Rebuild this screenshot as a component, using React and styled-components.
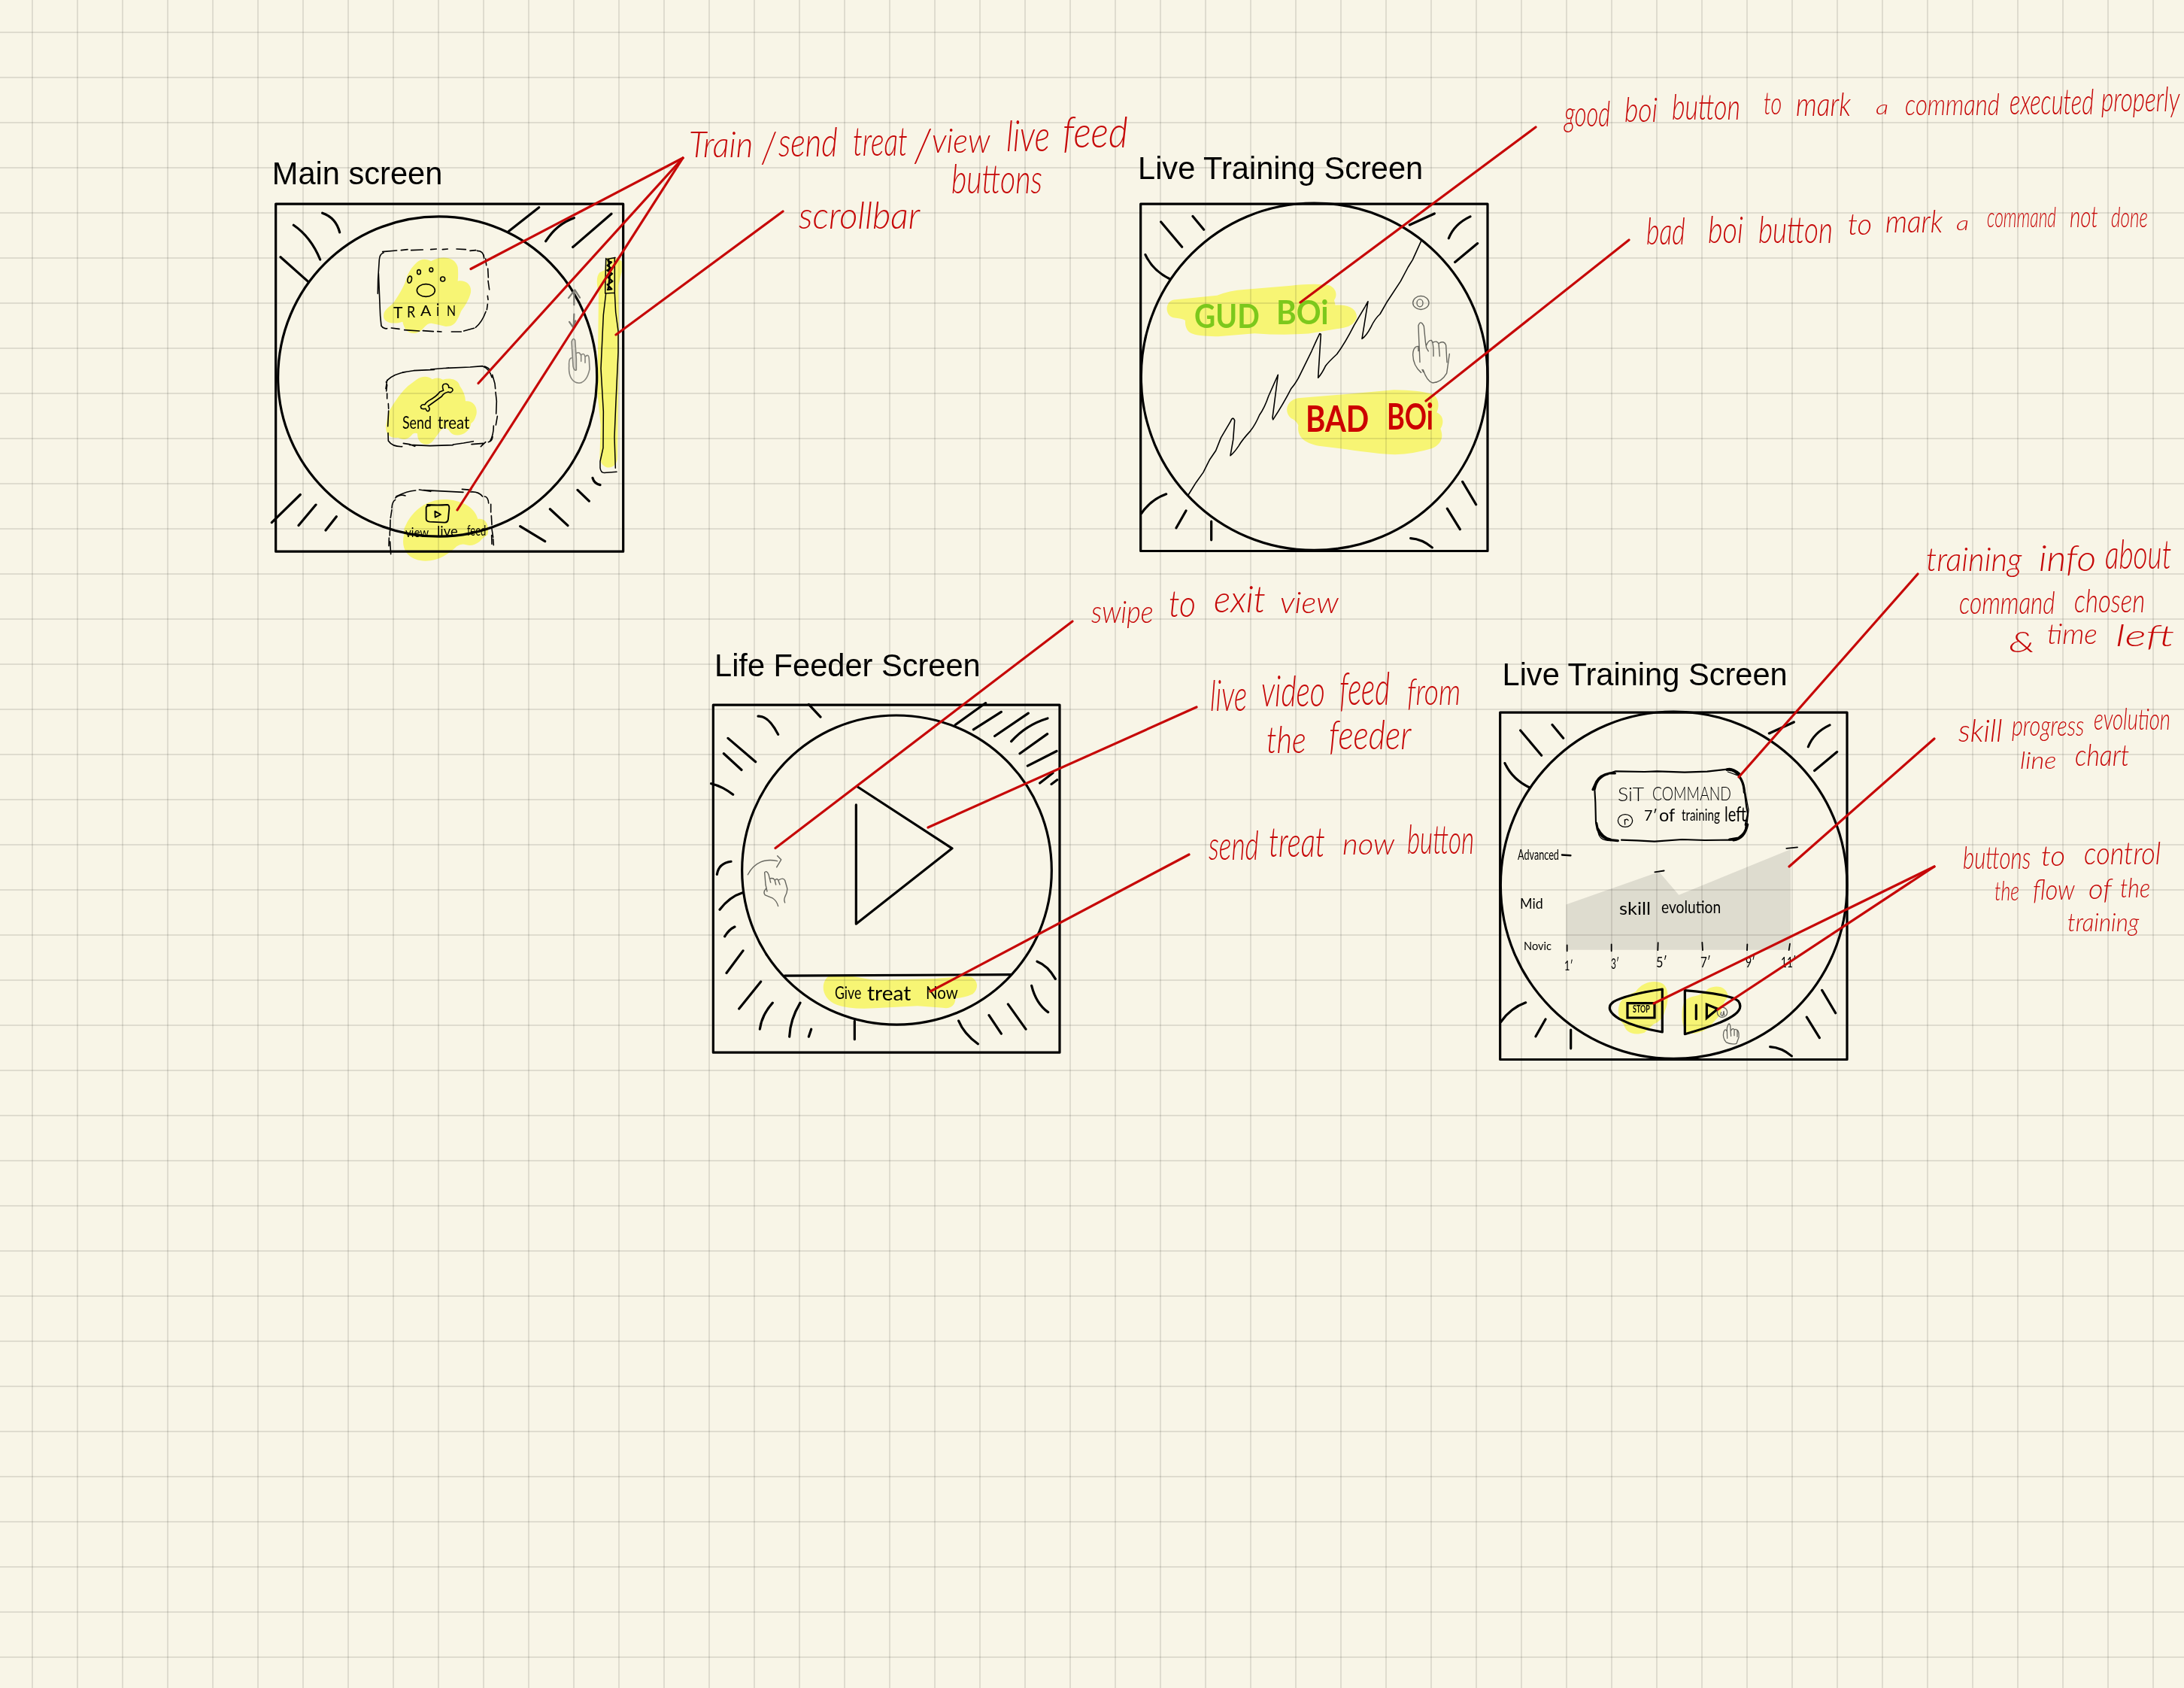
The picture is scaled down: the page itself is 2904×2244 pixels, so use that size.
import React, { useLayoutEffect, useRef, useState } from 'react';
import styled, { createGlobalStyle } from 'styled-components';

const INK = '#000000';
const RED = '#c60808';
const GREEN = '#7cc81c';

const Global = createGlobalStyle`
  html, body { margin: 0; padding: 0; background: #f8f5e7; }
`;

const Paper = styled.main`
  position: relative;
  width: 2904px;
  height: 2244px;
  overflow: hidden;
  background-color: #f8f5e7;
  background-image:
    linear-gradient(to right, rgba(0, 0, 0, 0.1) 2px, transparent 2px),
    linear-gradient(to bottom, rgba(0, 0, 0, 0.1) 2px, transparent 2px);
  background-size: 60px 60px;
  background-position: 42px 42px;
`;

/* A drawing pinned on the paper */
const Sketch = styled.svg`
  position: absolute;
  left: ${(p) => p.$x}px;
  top: ${(p) => p.$y}px;
  width: ${(p) => p.$w}px;
  height: ${(p) => p.$h}px;
  overflow: visible;
  fill: none;
  stroke: ${INK};
  stroke-width: 3.2px;
  stroke-linecap: round;
  stroke-linejoin: round;

  * { vector-effect: non-scaling-stroke; }
`;

const MarkerLayer = styled(Sketch)`
  mix-blend-mode: multiply;
  fill: #feff80;
  stroke: none;
`;

const Fine = styled.g`
  stroke-width: ${(p) => p.$width || 1.6}px;
`;

const Pencil = styled.g`
  stroke: ${(p) => p.$tone || '#66665f'};
  stroke-width: ${(p) => p.$width || 1.4}px;
`;

const Leaders = styled(Sketch)`
  stroke: ${RED};
  stroke-width: 3.2px;
`;

const Title = styled.h2`
  position: absolute;
  left: ${(p) => p.$x}px;
  top: ${(p) => p.$y}px;
  margin: 0;
  font: 400 41.6px/48px 'Liberation Sans', Arial, sans-serif;
  color: ${INK};
  white-space: nowrap;
`;

const Note = styled.p`
  margin: 0;
  color: ${(p) => p.$color || INK};
  font-family: Lato, 'Open Sans', sans-serif;
  font-style: ${(p) => (p.$upright ? 'normal' : 'italic')};
  font-weight: ${(p) => p.$weight || 400};
`;

const Ink = styled.span`
  position: absolute;
  left: ${(p) => p.$x}px;
  top: ${(p) => p.$y - p.$size * 0.887}px;
  font-size: ${(p) => p.$size}px;
  line-height: 1;
  white-space: nowrap;
  transform-origin: 0 88.7%;
`;

function Word({ text, x, to, y, rise }) {
  const ref = useRef(null);
  const [scale, setScale] = useState(1);
  useLayoutEffect(() => {
    setScale((to - x) / ref.current.offsetWidth);
  }, [x, to]);
  return (
    <Ink ref={ref} $x={x} $y={y} $size={rise / 0.76} style={{ transform: `scaleX(${scale})` }}>
      {text}
    </Ink>
  );
}

function Handwriting({ words, ...style }) {
  return (
    <Note {...style}>
      {words.map(([text, x, to, y, rise]) => (
        <React.Fragment key={`${text}${x}`}>
          <Word text={text} x={x} to={to} y={y} rise={rise} />{' '}
        </React.Fragment>
      ))}
    </Note>
  );
}

/* word, left, right, baseline, height above the baseline */
const annotations = [
  [
    ['Train', 916, 1001, 209, 36], ['/', 1013, 1031, 216, 44], ['send', 1035, 1114, 209, 40],
    ['treat', 1134, 1207, 208, 40], ['/', 1216, 1237, 216, 46], ['view', 1239, 1317, 204, 34],
    ['live', 1338, 1396, 201, 44], ['feed', 1413, 1500, 196, 44], ['buttons', 1265, 1386, 258, 40],
  ],
  [['scrollbar', 1062, 1223, 304, 38]],
  [
    ['good', 2080, 2141, 168, 36], ['boi', 2160, 2204, 163, 35], ['button', 2223, 2314, 159, 36],
    ['to', 2345, 2369, 153, 31], ['mark', 2388, 2461, 155, 33], ['a', 2494, 2511, 152, 20],
    ['command', 2533, 2659, 153, 30], ['executed', 2672, 2784, 152, 36], ['properly', 2794, 2898, 149, 34],
  ],
  [
    ['bad', 2189, 2241, 325, 38], ['boi', 2271, 2318, 323, 38], ['button', 2338, 2437, 323, 38],
    ['to', 2457, 2489, 312, 30], ['mark', 2507, 2583, 309, 32], ['a', 2601, 2618, 306, 20],
    ['command', 2642, 2734, 303, 28], ['not', 2752, 2790, 302, 30], ['done', 2807, 2856, 302, 29],
  ],
  [
    ['swipe', 1451, 1534, 828, 32], ['to', 1554, 1590, 820, 38], ['exit', 1614, 1683, 814, 38],
    ['view', 1702, 1780, 815, 30],
  ],
  [
    ['live', 1609, 1658, 945, 43], ['video', 1677, 1762, 939, 43], ['feed', 1781, 1848, 938, 46],
    ['from', 1871, 1942, 937, 38], ['the', 1684, 1737, 1001, 37], ['feeder', 1767, 1876, 997, 40],
  ],
  [
    ['send', 1607, 1674, 1144, 40], ['treat', 1687, 1762, 1139, 42], ['now', 1785, 1854, 1136, 30],
    ['button', 1871, 1960, 1136, 40],
  ],
  [
    ['training', 2561, 2688, 760, 33], ['info', 2711, 2787, 759, 36], ['about', 2799, 2887, 757, 40],
    ['command', 2605, 2733, 816, 32], ['chosen', 2758, 2852, 815, 33], ['&', 2671, 2706, 868, 28],
    ['time', 2722, 2789, 857, 28], ['left', 2813, 2892, 859, 30],
  ],
  [
    ['skill', 2604, 2663, 986, 32], ['progress', 2675, 2771, 979, 28], ['evolution', 2784, 2886, 970, 30],
    ['line', 2686, 2734, 1023, 24], ['chart', 2759, 2831, 1018, 30],
  ],
  [
    ['buttons', 2610, 2700, 1155, 32], ['to', 2714, 2746, 1151, 29], ['control', 2771, 2873, 1149, 32],
    ['the', 2652, 2685, 1198, 27], ['flow', 2703, 2759, 1197, 28], ['of', 2777, 2808, 1196, 28],
    ['the', 2819, 2859, 1194, 27], ['training', 2749, 2844, 1239, 25],
  ],
];

const mainWords = [
  ['Send', 535, 574, 571, 17], ['treat', 582, 624, 571, 18],
  ['view', 539, 570, 714, 13], ['live', 581, 609, 713, 14], ['feed', 621, 646, 713, 15],
];
const trainLetters = [
  ['T', 523, 535, 423, 16], ['R', 541, 552, 422, 16], ['A', 559, 573, 421, 15],
  ['i', 580, 584, 421, 17], ['N', 594, 606, 421, 15],
];
const feederWords = [['Give', 1110, 1145, 1329, 18], ['treat', 1153, 1211, 1331, 21], ['Now', 1231, 1274, 1329, 17]];

const statsWords = [
  ['7′', 2186, 2204, 1092, 15], ['of', 2206, 2227, 1093, 17], ['training', 2236, 2287, 1091, 16],
  ['left', 2293, 2322, 1092, 20], ['skill', 2153, 2195, 1217, 17], ['evolution', 2209, 2288, 1215, 17],
  ['Advanced', 2018, 2073, 1143, 14], ['Mid', 2021, 2052, 1208, 14], ['Novic', 2026, 2063, 1263, 12],
  ['1′', 2080, 2092, 1290, 13], ['3′', 2142, 2153, 1288, 14], ['5′', 2202, 2217, 1286, 14],
  ['7′', 2261, 2275, 1286, 14], ['9′', 2321, 2334, 1286, 14], ['11′', 2368, 2388, 1286, 14],
];
const commandWords = [['SiT', 2151, 2186, 1065, 19], ['COMMAND', 2197, 2302, 1064, 19]];

const leaders = [
  [908, 210, 626, 357.5], [908, 210, 636, 509.5], [908, 210, 608, 678], [1041, 281, 819, 445],
  [2042, 169, 1729, 402], [2166, 319, 1896, 533], [1426, 826, 1031, 1127.5], [1591, 940, 1234, 1100],
  [1581, 1136, 1237, 1318], [2550, 763, 2312, 1033], [2572, 982, 2379, 1152],
  [2572, 1152, 2199, 1334], [2572, 1152, 2284, 1342],
];

const square = { $w: 520, $h: 560, viewBox: '0 0 1560 1568', preserveAspectRatio: 'none' };

function MainScreen() {
  return (
    <section>
      <MarkerLayer $x={490} $y={320} $w={180} $h={430} viewBox="0 0 540 1290">
        <path d="M193 86C210 70 235 72 249 82C290 57 345 63 356 105Q359 130 356 161C390 155 417 180 406 214Q397 245 370 280C353 320 346 343 308 342Q280 334 250 329C224 330 219 361 190 368C160 373 143 357 136 323C106 333 70 331 61 308C56 280 75 271 98 250Q145 183 155 139Q169 107 193 86Z" />
        <path d="M190 555C215 537 240 540 254 553Q275 542 297 554C324 546 357 552 364 579Q386 609 387 640C415 636 437 660 430 694Q421 724 409 728C405 772 345 790 325 762Q308 735 288 757Q270 782 258 797C240 824 194 816 195 769Q180 762 168 780C150 798 132 792 117 785C85 790 66 770 70 735L79 685Q121 612 157 580Z" />
        <path d="M150 1132C177 1075 233 1033 300 1032C371 1032 425 1064 436 1110C467 1105 484 1135 475 1172Q455 1184 443 1200Q415 1221 390 1213Q370 1206 352 1219C320 1250 279 1278 226 1277C160 1275 126 1232 142 1170Q138 1150 150 1132Z" />
      </MarkerLayer>
      <MarkerLayer $x={340} $y={190} {...square}>
        <path d="M1372 482L1391 474L1400 428L1436 427L1460 440V480L1447 530L1449 700L1443 1170C1443 1215 1386 1225 1372 1175L1376 1050L1363 930L1368 560Q1353 500 1372 482Z" />
      </MarkerLayer>
      <Title $x={361.8} $y={207}>Main screen</Title>
      <Sketch $x={340} $y={190} {...square}>
        <rect x="80" y="227" width="1386" height="1294" />
        <path d="M731 274C1080 274 1361 540 1361 870C1361 1200 1080 1465 731 1465C375 1465 89 1200 89 873C89 540 375 274 731 274Z" />
        <path d="M266 261Q320 278 335 333M151 306Q220 350 257 434M99 425L210 517M1010 328L1130 240M1157 366Q1200 302 1270 279M1265 388L1419 264M64 1413L178 1309M171 1424L240 1347M279 1442L322 1391M1344 1247Q1350 1268 1374 1273M1284 1292L1330 1333M1174 1363L1245 1424M1055 1427L1154 1483" />
        <Fine $width={1.5}>
          <path d="M1398 433L1434 427M1397 430L1394 560L1432 558L1432 427M1397 560L1387 640L1377 840L1387 1000L1386 1135L1374 1185V1210Q1377 1228 1390 1228L1440 1224M1432 558L1436 630L1446 700V780L1437 960L1431 1095L1435 1210" />
          <path strokeWidth="2.4" d="M1405 438L1419 444L1403 456L1420 468L1402 474L1422 487L1405 500L1423 515L1403 527L1420 544L1404 546M1408 436L1412 500L1406 545" />
        </Fine>
        <Pencil $tone="#7d7c74" $width={2.2}>
          <path d="M1248 577L1273 547L1293 576M1270 550V603M1270 637L1268 685M1251 666L1266 686L1276 662" />
        </Pencil>
        <Pencil $tone="#85847c" $width={1.6}>
          <path fill="#d8d5ca" d="M1266 831L1260 740Q1266 722 1274 735L1279 804V845Q1270 850 1266 831Z" />
          <path d="M1279 783Q1292 775 1298 792V813M1298 790Q1310 778 1314 797V818M1314 796Q1329 782 1330 805L1332 842C1325 874 1310 892 1290 894C1262 893 1247 867 1250 830Q1248 802 1260 800" />
        </Pencil>
      </Sketch>
      <Sketch $x={490} $y={320} $w={180} $h={430} viewBox="0 0 540 1290">
        <Fine>
          <path d="M60 48Q45 53 43 75L38 153L37 211M43 75L38 153M40 130L47 300L51 340M56 44L113 39M130 38L156 35M170 38L217 36M248 35L271 33M295 35L316 33M351 33L388 35M405 40L428 38M433 40Q460 40 461 70M467 72L470 98M476 111L478 147M477 160L482 195M475 220L477 235M475 253L472 275M468 283Q452 327 427 346M421 349L380 360M370 363L331 363M51 339Q60 353 74 350M91 348L123 352M143 356L203 360M217 359L259 362M275 362L291 363" />
          <ellipse cx="229" cy="198" rx="36" ry="25" />
          <ellipse cx="201" cy="125" rx="7" ry="9" />
          <ellipse cx="250" cy="116" rx="7" ry="8" />
          <ellipse cx="296" cy="153" rx="9" ry="9" />
          <ellipse cx="164" cy="155" rx="8" ry="14" transform="rotate(12 164 155)" />
          <path d="M74 557Q102 530 155 522M135 525L180 518L263 514M248 513L320 507M309 508L405 504L455 500Q483 511 492 545M463 501Q480 507 486 518M494 535L504 570L506 590M507 604L511 640L509 690M514 700L508 735M499 738Q499 776 484 801M495 782Q493 800 478 803M70 564L76 557M73 565L69 590M74 575L71 600M74 609L74 630M79 650L80 670M80 678L77 740M78 767L79 798Q95 822 134 821M139 808Q165 810 185 820M163 814L245 818L337 815M337 813L379 807L418 800M411 812L457 808M467 803L448 821" />
          <path d="M299 597Q288 569 311 571Q321 575 320 586Q337 585 336 597Q330 609 318 603Q300 607 292 621L238 660Q247 669 241 678Q233 684 228 670Q208 674 208 661Q213 651 224 654L228 650Q222 652 240 638Q272 621 284 603Z" />
          <path d="M147 1017Q125 1009 107 1026M110 1020Q155 998 188 996M202 993L248 1000M219 995L378 1003M373 991L410 994M407 1002Q438 999 455 1020M463 1020Q477 1021 479 1047M107 1033Q94 1041 93 1066M93 1073L88 1105M87 1113L86 1158M85 1160V1176M82 1185L81 1217M86 1200L89 1250M488 1051V1083M490 1097L492 1133M491 1143L497 1183M491 1175L492 1210M497 1190L499 1214" />
          <path strokeWidth="1.9" d="M234 1053Q276 1056 315 1053Q322 1054 322 1067L318 1109Q317 1124 304 1124L244 1121Q230 1119 230 1109V1064Q232 1055 245 1057M265 1079L288 1092L266 1103Z" />
        </Fine>
      </Sketch>
      <Handwriting words={trainLetters} $upright />
      <Handwriting words={mainWords} $upright />
    </section>
  );
}

/* Frame, dial and corner shading shared by both training screens */
function TrainingFace() {
  return (
    <>
      <rect x="80" y="227" width="1384" height="1292" />
      <path d="M772 224C1156 224 1464 510 1464 870C1464 1230 1156 1516 772 1516C392 1516 82 1230 82 870C82 510 392 224 772 224Z" />
      <path d="M288 273L332 323M161 294L245 387M99 416Q128 475 196 506M1153 305L1252 263M1309 355Q1331 302 1395 274M1334 444L1424 374M83 1379Q122 1327 182 1307M222 1433L261 1369M362 1409V1478M1364 1261L1418 1346M1303 1361L1354 1438M1157 1472Q1203 1475 1243 1506" />
    </>
  );
}

function ChoiceScreen() {
  return (
    <section>
      <MarkerLayer $x={1490} $y={190} {...square}>
        <path d="M213 584L385 568Q430 549 500 545L680 531Q780 521 832 530C863 542 865 570 852 585L857 604C907 601 944 616 942 651Q933 680 890 688L750 710Q650 717 534 709L390 720Q310 721 280 708C262 697 257 680 258 661Q247 653 210 650C176 642 176 590 213 584Z" />
        <path d="M707 950L900 935L1090 919Q1190 920 1240 934C1270 944 1273 980 1261 1003C1289 1015 1291 1042 1276 1064C1290 1096 1279 1121 1243 1137Q1170 1158 1095 1160Q1020 1157 900 1140L790 1128C725 1115 704 1090 709 1051Q699 1031 680 1025C650 1002 662 958 707 950Z" />
      </MarkerLayer>
      <Title $x={1513} $y={199.5}>Live Training Screen</Title>
      <Sketch $x={1490} $y={190} {...square}>
        <TrainingFace />
        <Fine $width={1.6}>
          <path d="M1199 365L1165 435L1147 462L1117 515L1064 590L1035 637Q1015 653 999 685Q980 719 963 729L987 590L975 610Q951 648 932 678Q895 746 863 786Q828 816 817 831Q802 860 788 874L799 712L794 710Q782 733 762 775L720 855Q704 889 680 915Q650 970 608 1030L606 1023L628 863L590 943Q575 985 554 1013Q537 1050 518 1072Q485 1105 471 1128Q453 1153 438 1164L449 1105L455 1033Q447 1015 438 1038L400 1098L380 1145L356 1178L330 1226L301 1264L271 1309" />
        </Fine>
        <Pencil>
          <ellipse cx="1198" cy="595" rx="32" ry="25" />
          <ellipse cx="1194" cy="596" rx="12" ry="14" />
          <path d="M1194 816L1190 730L1188 680Q1197 657 1210 682L1216 740L1220 763L1228 775M1219 755Q1229 732 1240 735Q1249 743 1248 794M1247 742Q1263 735 1269 748L1273 794M1271 745Q1292 735 1298 753L1302 817M1312 785L1301 857Q1280 891 1245 893Q1223 889 1207 845M1203 844L1208 853M1188 774V757Q1167 756 1166 789Q1167 829 1199 855" />
        </Pencil>
      </Sketch>
      <Handwriting
        $upright $weight={700} $color={GREEN}
        words={[['GUD', 1588, 1675, 437, 34], ['BOi', 1697, 1767, 432, 34]]}
      />
      <Handwriting
        $upright $weight={700} $color="#cc0000"
        words={[['BAD', 1736, 1820, 574, 37], ['BOi', 1844, 1906, 571, 36]]}
      />
    </section>
  );
}

function FeederScreen() {
  return (
    <section>
      <MarkerLayer $x={930} $y={850} {...square}>
        <path d="M515 1254Q580 1247 635 1258Q690 1270 740 1268L940 1263Q1040 1253 1080 1256C1112 1265 1116 1301 1090 1320Q1060 1333 1021 1336C1021 1363 1000 1377 970 1371L870 1364L700 1373Q600 1378 550 1361C483 1337 483 1277 515 1254Z" />
      </MarkerLayer>
      <Title $x={950} $y={861}>Life Feeder Screen</Title>
      <Sketch $x={930} $y={850.5} {...square}>
        <rect x="55" y="241" width="1382" height="1294" />
        <path d="M785 280C1130 280 1405 535 1405 857C1405 1180 1130 1431 787 1431C445 1431 170 1180 170 857C170 535 445 280 785 280Z" />
        <path d="M340 1249L1243 1245M631 546L1008 775L625 1056V613" />
        <path d="M436 239L483 286M234 283Q275 280 314 351M114 365L224 453M97 422L168 483M47 534Q92 544 134 575M70 872Q77 830 126 824M81 1003Q120 955 172 940M101 1103Q118 1077 141 1067M108 1239L174 1156M158 1372L245 1271M241 1448Q249 1395 292 1350M359 1476Q362 1412 402 1350M436 1476L446 1448M619 1418V1486M1021 315L1142 234M1093 333L1204 267M1178 357L1312 272M1244 377Q1303 315 1389 291M1278 422L1388 349M1309 468L1425 413M1358 532L1410 494M1404 536L1427 520M1347 1196Q1390 1211 1420 1261M1325 1286Q1343 1353 1391 1385M1231 1355L1302 1448M1155 1396L1204 1465M1034 1417Q1055 1465 1111 1503" />
        <Pencil>
          <path d="M193 873C220 825 265 812 311 822M311 803L326 817L308 845" />
          <path d="M270 935L264 910L260 865Q268 855 276 872L284 902M281 888Q293 883 300 892L305 910M302 893Q310 885 314 893L321 910M318 892Q334 883 341 894L350 923Q352 938 341 956Q336 967 341 977M267 924Q252 937 262 949Q280 956 293 961Q308 970 314 990" />
        </Pencil>
      </Sketch>
      <Handwriting words={feederWords} $upright />
    </section>
  );
}

function StatsScreen() {
  return (
    <section>
      <MarkerLayer $x={2090} $y={1000} $w={320} $h={400} viewBox="0 0 960 1200">
        <path d="M255 955C280 917 330 907 360 922C392 940 385 1000 372 1030Q365 1070 325 1085L290 1118C245 1133 213 1115 208 1087C180 1062 178 1010 203 985Q225 968 255 955Z" />
        <path d="M490 973Q522 967 545 943C580 924 619 937 624 975Q600 1000 590 1050L553 1090C525 1120 475 1130 454 1115C435 1080 435 1020 451 990Q470 976 490 973Z" />
      </MarkerLayer>
      <Title $x={1997.5} $y={872.5}>Live Training Screen</Title>
      <Sketch $x={1967.6} $y={866} {...square}>
        <TrainingFace />
      </Sketch>
      <Sketch $x={1970} $y={860} {...square}>
        <path fill="rgba(0,0,0,0.1)" stroke="none" d="M337 959L708 837L787 923L1233 753V1128H337Z" />
        <Fine $width={1.8}>
          <path d="M691 838L728 833M1216 750L1260 746M341 1110V1132M518 1107V1132M704 1101L703 1129M880 1100L882 1129M1060 1107L1059 1129M1230 1105L1226 1129" />
          <path strokeWidth="2.5" d="M321 774L355 776" />
        </Fine>
      </Sketch>
      <Sketch $x={2090} $y={1000} $w={320} $h={400} viewBox="0 0 960 1200">
        <Fine $width={2.1}>
          <path d="M91 148L94 200L96 280M150 84L175 76L290 78L340 76L450 80L540 77L620 68M198 350L260 352L330 356L440 348L530 351L640 350M682 122L690 165L697 220L702 245L692 290" />
        </Fine>
        <Fine $width={3.2}>
          <path d="M84 149L98 118Q112 91 150 84L172 84M91 146Q100 98 145 86M98 283L103 308Q116 344 155 350L184 353M103 304Q125 345 155 348M618 70Q656 67 673 105M673 104Q688 130 688 160M701 288Q690 345 645 351M696 287Q700 318 665 342L629 348M620 68Q640 62 668 86" />
        </Fine>
        <Fine $width={1.3}>
          <path d="M105 310Q103 352 155 353M622 78L660 92M690 150L705 230L698 295" />
          <ellipse cx="213" cy="273" rx="29" ry="25" />
          <path d="M212 288L211 269M214 270Q220 264 225 272" />
        </Fine>
        <path d="M361 945V1116Q260 1100 190 1064C150 1040 138 1015 167 995Q215 967 361 945ZM451 950V1124Q573 1090 625 1062C665 1040 683 1018 664 992Q628 964 451 950Z" />
        <path strokeLinejoin="miter" d="M222 1001H330V1059H222ZM496 1008V1064M538 1006L582 1024L538 1060Z" />
        <Pencil $width={1.3}>
          <ellipse cx="600" cy="1037" rx="20" ry="20" />
          <path d="M596 1037Q590 1050 602 1051L606 1033L608 1049M620 1141L619 1100Q626 1072 632 1090L635 1132M635 1110Q642 1098 648 1106V1130M648 1107Q658 1102 660 1112V1135M660 1108Q668 1115 666 1137L657 1162Q635 1167 616 1157Q600 1140 606 1115Q612 1100 618 1112" />
        </Pencil>
      </Sketch>
      <Handwriting words={commandWords} $upright $weight={300} />
      <Handwriting words={statsWords} $upright />
      <Handwriting words={[['STOP', 2171, 2194, 1347, 9.5]]} $upright $weight={700} />
    </section>
  );
}

export default function App() {
  return (
    <>
      <Global />
      <Paper>
        <MainScreen />
        <ChoiceScreen />
        <FeederScreen />
        <StatsScreen />
        {annotations.map((words) => (
          <Handwriting key={words[0][1]} words={words} $color={RED} $weight={300} />
        ))}
        <Leaders $x={0} $y={0} $w={2904} $h={2244} viewBox="0 0 2904 2244">
          {leaders.map(([x1, y1, x2, y2]) => (
            <line key={`${x2}-${y2}`} x1={x1} y1={y1} x2={x2} y2={y2} />
          ))}
        </Leaders>
      </Paper>
    </>
  );
}
